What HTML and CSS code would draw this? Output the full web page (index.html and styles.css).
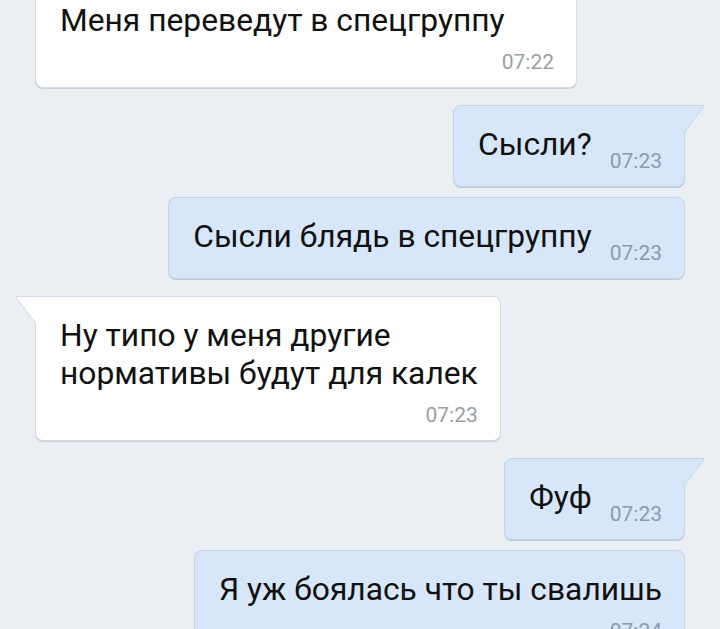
FILE: index.html
```html
<!DOCTYPE html>
<html lang="ru">
  <head>
    <meta charset="UTF-8" />
    <meta name="viewport" content="width=device-width, initial-scale=1.0" />
    <title>Диалог</title>
    <link rel="stylesheet" href="styles.css">
  </head>
  <body>
    <!-- лента сообщений -->
    <div class="chat">
      <div class="msg in cut">
        <p class="text">Меня переведут в спецгруппу</p>
        <div class="stamp stamp-row">07:22</div>
      </div>

      <div class="msg out tail">
        <svg class="tail-out" width="21" height="30" viewBox="0 0 21 30">
          <polygon points="0,1 20,1 0,27" />
          <polyline points="0,0.5 20.5,0.5 0.5,27.5" />
        </svg>
        <p class="text">Сысли?<span class="stamp stamp-inline">07:23</span></p>
      </div>

      <div class="msg out">
        <p class="text">Сысли блядь в спецгруппу<span class="stamp stamp-inline">07:23</span></p>
      </div>

      <div class="msg in tail">
        <svg class="tail-in" width="21" height="30" viewBox="0 0 21 30">
          <polygon points="21,1 1,1 21,27" />
          <polyline points="21,0.5 0.5,0.5 20.5,27.5" />
        </svg>
        <p class="text">Ну типо у меня другие<br>нормативы будут для калек</p>
        <div class="stamp stamp-row">07:23</div>
      </div>

      <div class="msg out tail">
        <svg class="tail-out" width="21" height="30" viewBox="0 0 21 30">
          <polygon points="0,1 20,1 0,27" />
          <polyline points="0,0.5 20.5,0.5 0.5,27.5" />
        </svg>
        <p class="text">Фуф<span class="stamp stamp-inline">07:23</span></p>
      </div>

      <div class="msg out">
        <p class="text">Я уж боялась что ты свалишь</p>
        <div class="stamp stamp-row">07:24</div>
      </div>
    </div>
  </body>
</html>
```

FILE: styles.css
```css
* {
  box-sizing: border-box;
}
html,
body {
  margin: 0;
  height: 100%;
}
body {
  background-color: #ebeef2;
  font-family: Roboto, "Noto Sans", sans-serif;
  overflow: hidden;
}
.chat {
  display: flex;
  flex-direction: column;
  padding: 0 35px;
  margin-top: -19px; /* первое сообщение уходит за верх экрана */
}
.msg {
  position: relative;
  border: 1px solid #d5dbe2;
  border-radius: 8px;
  padding: 20px 22px 13px 24px;
  box-shadow: 0 1px 0 #cbd2da;
}
.msg + .msg {
  margin-top: 10px;
}
.msg.tail {
  margin-top: 17px;
}
.in {
  align-self: flex-start;
  background-color: #ffffff;
}
.out {
  align-self: flex-end;
  background-color: #d7e6f8;
  border-color: #c6d4e4;
  box-shadow: 0 1px 0 #bccbdc;
}
.in.tail {
  border-top-left-radius: 0;
}
.out.tail {
  border-top-right-radius: 0;
}
.cut {
  min-width: 542px;
  border-top-left-radius: 0;
  border-top-right-radius: 0;
}
.tail-out,
.tail-in {
  position: absolute;
  top: -1px;
  display: block;
}
.tail-out {
  right: -21px;
}
.tail-in {
  left: -21px;
}
.tail-out polygon {
  fill: #d7e6f8;
}
.tail-in polygon {
  fill: #ffffff;
}
.tail-out polyline,
.tail-in polyline {
  fill: none;
  stroke-width: 1;
}
.tail-out polyline {
  stroke: #c6d4e4;
}
.tail-in polyline {
  stroke: #d5dbe2;
}
.text {
  margin: 0;
  font-size: 31.75px;
  line-height: 38px;
  color: #111111;
}
.stamp {
  font-size: 21px;
  line-height: 24px;
  color: #9a9fa6;
}
.out .stamp {
  color: #8b9bae;
}
.stamp-inline {
  display: inline-block;
  margin-left: 18px;
  vertical-align: -13px;
}
.stamp-row {
  margin-top: 10px;
  text-align: right;
}
```
